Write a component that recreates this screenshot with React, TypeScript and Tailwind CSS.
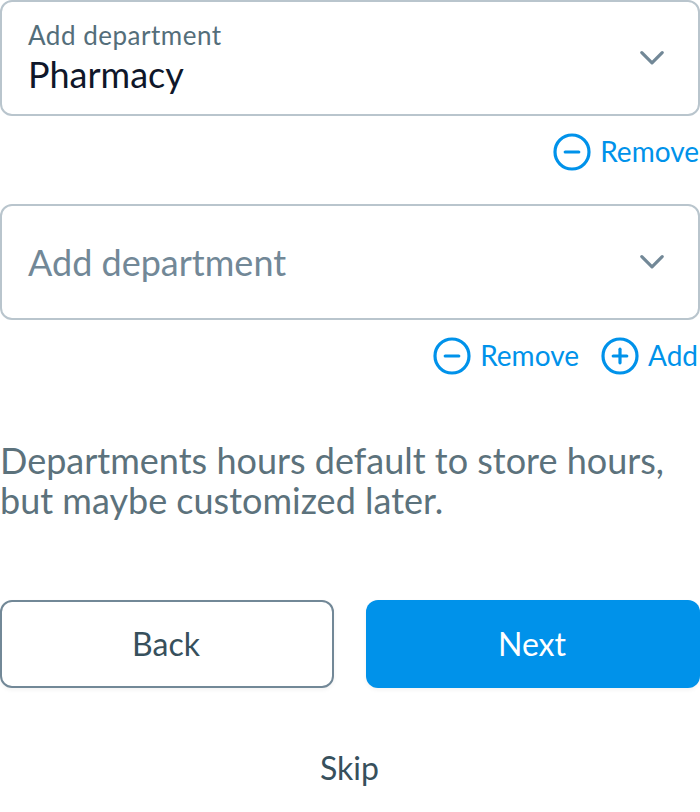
import React from "react";

function Chevron() {
  return (
    <svg className="h-6 w-6 shrink-0" viewBox="0 0 24 24" fill="none" stroke="#728897" strokeWidth="3.2" strokeLinecap="round" strokeLinejoin="round">
      <path d="M1.8 6.6 12 16.8 22.2 6.6" />
    </svg>
  );
}

function CircleAction({ label, plus = false }: { label: string; plus?: boolean }) {
  return (
    <button className="flex h-9 items-center gap-2 text-[28px] leading-9 text-[#0092ea]">
      <svg className="h-10 w-10 shrink-0" viewBox="0 0 40 40" fill="none" stroke="currentColor" strokeWidth="3.2" strokeLinecap="round">
        <circle cx="20" cy="20" r="17" />
        <path d="M13.2 20h13.6" />
        {plus && <path d="M20 13.2v13.6" />}
      </svg>
      <span className="pb-0.5">{label}</span>
    </button>
  );
}

export default function App() {
  return (
    <main className="flex h-[812px] w-[700px] flex-col overflow-hidden bg-white font-['Lato',sans-serif]">
      <div className="flex h-[116px] shrink-0 items-center justify-between rounded-xl border-2 border-[#b9c5cd] pl-[26px] pr-[34px]">
        <div className="flex flex-col pt-px">
          <span className="text-[26px] leading-8 tracking-[0.52px] text-[#546e7a]">Add department</span>
          <span className="text-[36px] leading-[47px] text-[#0f172a]">Pharmacy</span>
        </div>
        <Chevron />
      </div>
      <div className="mt-[18px] flex h-9 shrink-0 justify-end pr-px">
        <CircleAction label="Remove" />
      </div>
      <div className="mt-[34px] flex h-[116px] shrink-0 items-center justify-between rounded-xl border-2 border-[#b9c5cd] pl-[26px] pr-[34px]">
        <span className="text-[36px] text-[#728897]">Add department</span>
        <Chevron />
      </div>
      <div className="mt-[18px] flex h-9 shrink-0 justify-end gap-[21px] pr-0.5">
        <CircleAction label="Remove" />
        <CircleAction label="Add" plus />
      </div>
      <p className="mt-[66px] text-[36px] leading-10 text-[#5c727c]">
        Departments hours default to store hours,<br />but maybe customized later.
      </p>
      <div className="mt-20 grid shrink-0 grid-cols-2 gap-8">
        <button className="h-[88px] rounded-xl border-2 border-[#728897] pr-0.5 text-[32px] text-[#37505c] shadow-[0_2px_4px_rgba(0,0,0,0.05)]">Back</button>
        <button className="h-[88px] rounded-xl bg-[#0092ea] pr-0.5 text-[32px] text-white shadow-[0_2px_4px_rgba(0,0,0,0.05)]">Next</button>
      </div>
      <button className="mt-[60px] self-center pr-px text-[32px] leading-10 text-[#37505c]">Skip</button>
    </main>
  );
}
